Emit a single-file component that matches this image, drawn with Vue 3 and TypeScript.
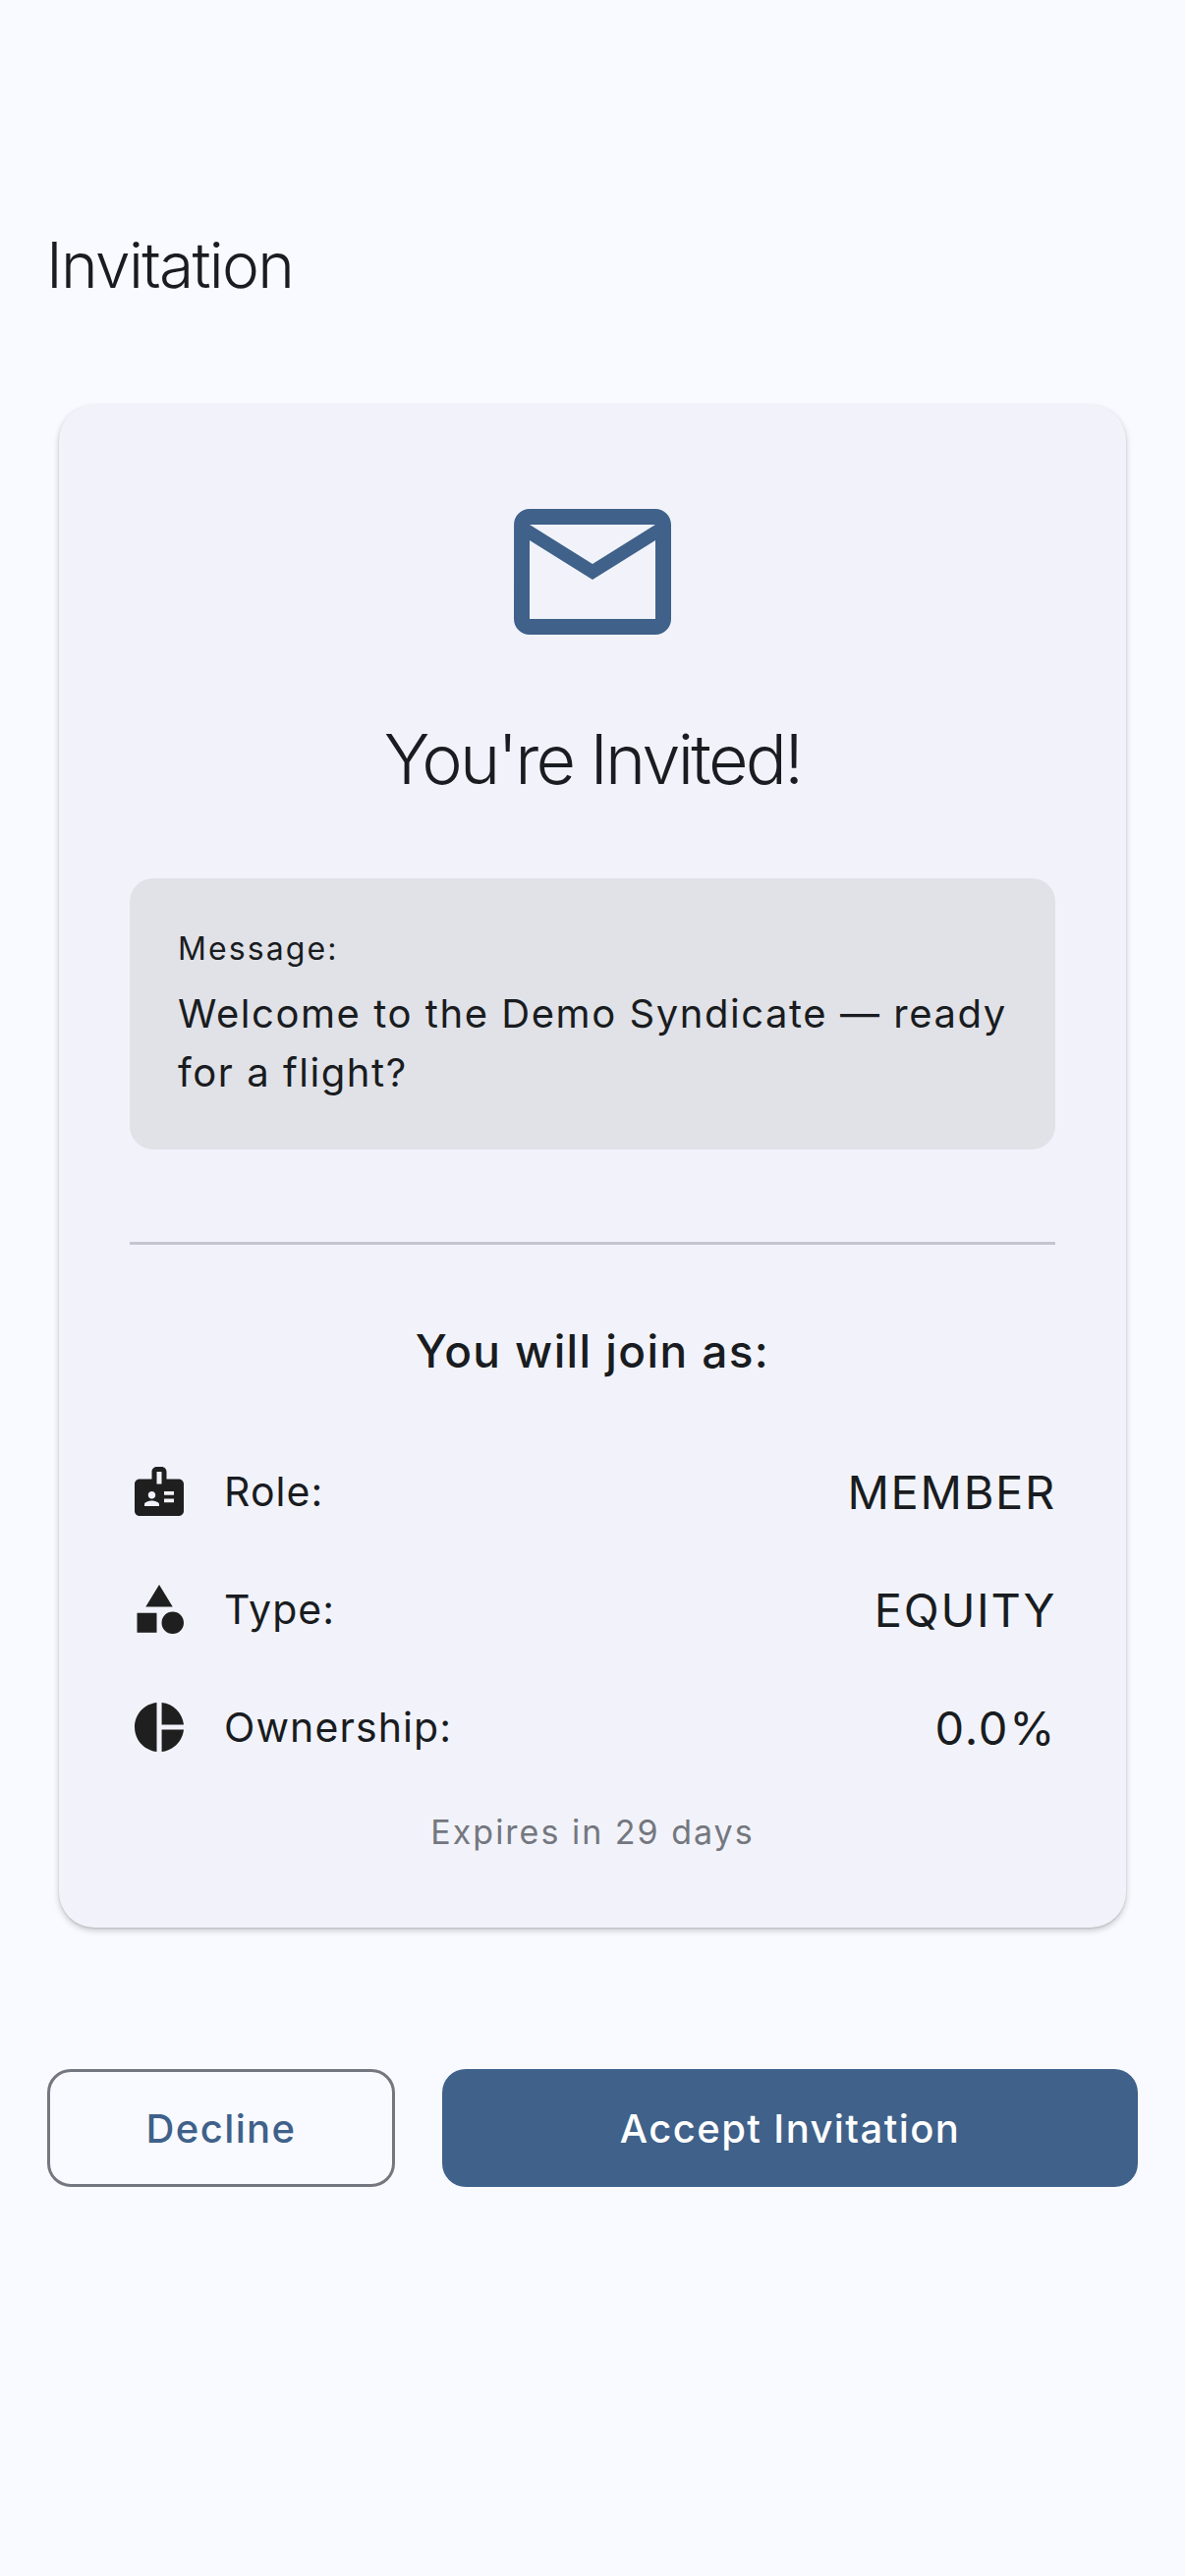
<script setup lang="ts">
interface Row { label: string; value: string; d: string }
const rows: Row[] = [
  { label: 'Role:', value: 'MEMBER', d: 'M20 7h-5V4c0-1.1-.9-2-2-2h-2c-1.1 0-2 .9-2 2v3H4c-1.1 0-2 .9-2 2v11c0 1.1.9 2 2 2h16c1.1 0 2-.9 2-2V9c0-1.1-.9-2-2-2zM9 12c.83 0 1.5.67 1.5 1.5S9.83 15 9 15s-1.5-.67-1.5-1.5S8.17 12 9 12zm3 6H6v-.75c0-1 2-1.5 3-1.5s3 .5 3 1.5V18zm1-9h-2V4h2v5zm5 7.5h-4V15h4v1.5zm0-3h-4V12h4v1.5z' },
  { label: 'Type:', value: 'EQUITY', d: 'M12 2l-5.5 9h11zM17.5 13a4.5 4.5 0 1 0 0 9a4.5 4.5 0 1 0 0-9zM3 13.5h8v8H3z' },
  { label: 'Ownership:', value: '0.0%', d: 'M11 2v20c-5.07-.5-9-4.79-9-10s3.93-9.5 9-10zm2.03 0v8.99H22c-.47-4.74-4.24-8.52-8.97-8.99zm0 11.01V22c4.74-.47 8.5-4.25 8.97-8.99h-8.97z' },
]
</script>

<template>
  <div class="page">
    <h1 class="title">Invitation</h1>
    <section class="card">
      <svg class="mail" viewBox="0 0 24 24" fill="#3f618a"><path d="M20 4H4c-1.1 0-1.99.9-1.99 2L2 18c0 1.1.9 2 2 2h16c1.1 0 2-.9 2-2V6c0-1.1-.9-2-2-2zm0 14H4V8l8 5 8-5v10zm-8-7L4 6h16l-8 5z" /></svg>
      <h2 class="invited">You're Invited!</h2>
      <div class="message">
        <div class="msg-label">Message:</div>
        <div class="msg-text">Welcome to the Demo Syndicate — ready for a flight?</div>
      </div>
      <div class="divider"></div>
      <h3 class="join">You will join as:</h3>
      <div class="rows">
        <div v-for="r in rows" :key="r.label" class="row">
          <svg class="ico" viewBox="0 0 24 24" fill="#1f1f1f"><path :d="r.d" /></svg>
          <span class="label">{{ r.label }}</span>
          <span class="value">{{ r.value }}</span>
        </div>
      </div>
      <div class="expires">Expires in 29 days</div>
    </section>
    <div class="actions">
      <button class="btn decline">Decline</button>
      <button class="btn accept">Accept Invitation</button>
    </div>
  </div>
</template>

<style scoped>
.page { width: 1206px; height: 2622px; background: #f9faff; padding: 228px 48px 0; box-sizing: border-box; font-family: Inter, "Noto Sans", sans-serif; color: #191c20; overflow: hidden; }
.title { margin: 0 0 0 -1px; font-size: 64px; font-weight: 300; line-height: 84px; letter-spacing: -1.7px; }
.card { margin: 100px 12px 0; height: 1550px; box-sizing: border-box; background: #f2f3fa; border-radius: 36px; padding: 74px 72px 0; display: flex; flex-direction: column; box-shadow: 0 3px 6px rgba(0,0,0,.2), 0 1px 2px rgba(0,0,0,.12); }
.mail { width: 192px; height: 192px; align-self: center; flex: none; }
.invited { margin: 47px 0 1px; text-align: center; font-size: 70px; line-height: 96px; font-weight: 300; letter-spacing: -2.7px; }
.message { margin-top: 72px; background: #e1e2e8; border-radius: 24px; padding: 48px 24px 48px 49px; height: 276px; box-sizing: border-box; }
.msg-label { font-size: 32px; line-height: 48px; letter-spacing: 2.1px; }
.msg-text { margin-top: 12px; font-size: 40px; line-height: 60px; letter-spacing: 1.55px; }
.divider { margin-top: 94px; height: 3px; background: #c4c6cf; flex: none; }
.join { margin: 72px 0 0; text-align: center; font-size: 46px; line-height: 72px; font-weight: 500; letter-spacing: 1.4px; }
.rows { margin-top: 71px; display: flex; flex-direction: column; gap: 48px; }
.row { display: flex; align-items: center; height: 72px; }
.ico { width: 60px; height: 60px; margin-right: 36px; flex: none; }
.label { flex: 1; font-size: 41px; letter-spacing: 1.1px; }
.value { font-size: 47px; font-weight: 400; letter-spacing: 1.7px; margin-right: -1px; }
.expires { margin-top: 47px; text-align: center; font-size: 34px; line-height: 48px; letter-spacing: 2px; color: #74777f; }
.actions { margin-top: 144px; display: flex; gap: 48px; }
.btn { height: 120px; border-radius: 24px; font: 500 40px Inter, sans-serif; letter-spacing: 1.4px; box-sizing: border-box; }
.decline { width: 354px; background: transparent; border: 3px solid #74777f; color: #3f618a; }
.accept { flex: 1; background: #3f618a; border: 0; color: #fff; }
</style>
